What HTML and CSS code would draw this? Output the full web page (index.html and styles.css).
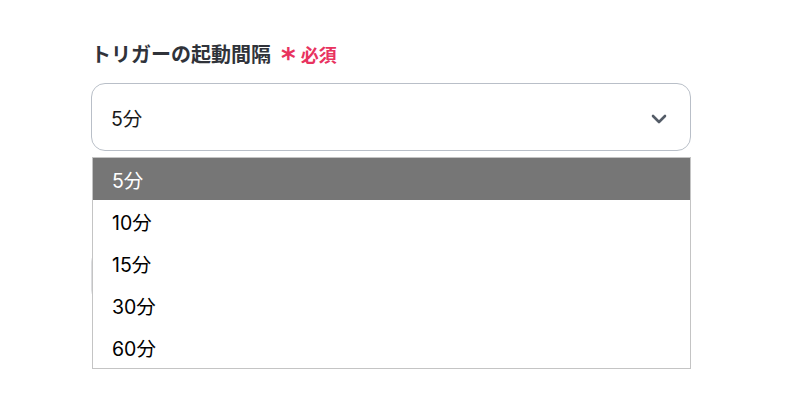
FILE: index.html
```html
<!DOCTYPE html>
<html lang="ja">
<head>
<meta charset="utf-8">
<link rel="stylesheet" href="styles.css">
</head>
<body>
<div class="form">
  <div class="label">トリガーの起動間隔<span class="star">*</span><span class="req">必須</span></div>
  <div class="field">
    <div class="select">
      <span class="value">5分</span>
      <svg class="chev" width="16" height="10" viewBox="0 0 16 10"><path d="M2 2 L8 8 L14 2" fill="none" stroke="#545c67" stroke-width="2.6" stroke-linecap="round" stroke-linejoin="round"/></svg>
    </div>
    <div class="menu">
      <div class="opt active">5分</div>
      <div class="opt">10分</div>
      <div class="opt">15分</div>
      <div class="opt">30分</div>
      <div class="opt">60分</div>
    </div>
  </div>
  <div class="behind-label">&nbsp;</div>
  <div class="behind-input"></div>
</div>
</body>
</html>
```
FILE: styles.css
```css
html, body {
  margin: 0;
  padding: 0;
  background: #fff;
}
body {
  font-family: Inter, "Noto Sans CJK JP", sans-serif;
  min-height: 417px;
}
.form {
  display: flex;
  flex-direction: column;
  padding: 40px 0 60px 91px;
  width: 600px;
}
.label {
  font-family: "Noto Sans CJK JP", sans-serif;
  font-weight: 700;
  font-size: 20px;
  line-height: 28px;
  color: #30333a;
  display: flex;
  align-items: center;
  margin-bottom: 15px;
}
.star {
  color: #e8335f;
  font-size: 28px;
  font-weight: 700;
  font-family: "DejaVu Sans", sans-serif;
  margin-left: 10px;
  line-height: 28px;
  position: relative;
  top: 5px;
}
.req {
  color: #e8335f;
  font-size: 18px;
  margin-left: 5px;
}
.field {
  position: relative;
  z-index: 2;
}
.select {
  height: 66px;
  border: 1px solid #b9bfc8;
  border-radius: 14px;
  box-sizing: content-box;
  display: flex;
  align-items: center;
  justify-content: space-between;
  padding: 0 23px 0 19px;
}
.value {
  font-size: 19.5px;
  color: #1a1a1a;
}
.chev {
  display: block;
  margin-top: 4px;
}
.menu {
  position: absolute;
  left: 1px;
  right: 0;
  top: 74px;
  border: 1px solid #c4c4c4;
  background: #fff;
}
.opt {
  height: 42px;
  display: flex;
  align-items: center;
  padding-left: 19px;
  font-size: 19.5px;
  color: #000;
}
.opt.active {
  background: #767676;
  color: #fff;
}
.behind-label {
  height: 101px;
}
.behind-input {
  height: 46px;
  border: 1px solid #dcdde0;
  border-radius: 10px;
}
```
